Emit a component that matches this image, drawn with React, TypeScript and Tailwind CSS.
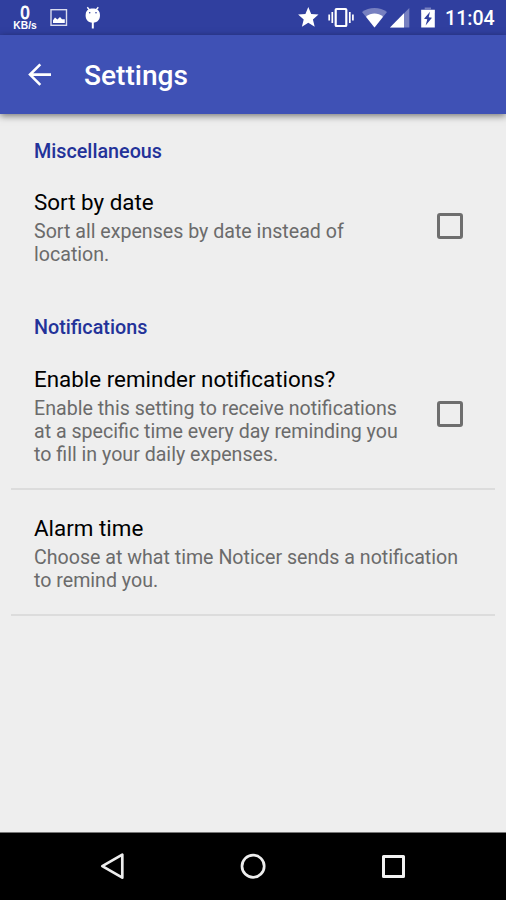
import React from "react";

function StatusBar() {
  return (
    <div className="flex h-[35px] shrink-0 items-start bg-[#303f9f] text-white">
      <div className="flex w-[50px] flex-col items-center pt-[5px] font-['Liberation_Sans',Arial,sans-serif]">
        <span className="scale-x-90 text-[18px] leading-[16px] [-webkit-text-stroke:0.9px_white]">0</span>
        <span className="text-[10.3px] font-bold leading-[10px]">KB/s</span>
      </div>
      <svg className="block" width="60" height="35" viewBox="50 0 60 35">
        <rect x="51" y="9.7" width="15.5" height="15.6" fill="none" stroke="#d9dcee" strokeWidth="1.4" />
        <path d="M53 23V20.2L55 17.6L57.4 19.6L60 17L62 19.3H64.8V23Z" fill="#fff" />
        <path d="M85.8 13.5C86.2 10.6 88.9 8.6 92.8 8.6C96.7 8.6 99.4 10.6 99.8 13.5C100.8 18.5 98 22.8 92.8 22.8C87.6 22.8 84.8 18.5 85.8 13.5Z" fill="#fff" />
        <path d="M87.3 7.2L89.8 10.2M98.3 7.2L95.8 10.2" fill="none" stroke="#fff" strokeWidth="1.4" />
        <path d="M92.8 22V28.5" fill="none" stroke="#fff" strokeWidth="2" />
        <circle cx="89.7" cy="12.8" r=".8" fill="#303f9f" />
        <circle cx="96" cy="12.8" r=".8" fill="#303f9f" />
      </svg>
      <div className="flex-1" />
      <svg className="block" width="150" height="35" viewBox="290 0 150 35">
        <path d="M308.3 7L311.2 14L318.5 14.5L312.9 19.4L314.7 26.8L308.3 22.8L301.9 26.8L303.7 19.4L298.1 14.5L305.4 14Z" fill="#fff" />
        <rect x="335.7" y="9" width="10.6" height="17" rx=".8" fill="none" stroke="#fff" strokeWidth="2.2" />
        <path d="M332.3 12V23M349.8 12V23" stroke="#fff" strokeWidth="1.7" />
        <path d="M329.2 14.5V20.5M352.9 14.5V20.5" stroke="#fff" strokeWidth="1.7" />
        <path d="M374.5 27.4L362 12C369 6.5 380 6.5 387 12Z" fill="#7780c0" />
        <path d="M374.5 27.4L366 16.7C371 12.3 378 12.3 383 16.7Z" fill="#fff" />
        <path d="M390 27.5L409.3 8V27.5Z" fill="#7780c0" />
        <path d="M390 27.5L404 13.3V27.5Z" fill="#fff" />
        <path d="M421.2 9.3H424.7V7.5H431V9.3H434.8V13H421.2Z" fill="#7780c0" />
        <path d="M421.2 10H434.8V27.5H421.2Z" fill="#fff" />
        <path d="M430 11.7L424 18.8L427.3 19.3L425.6 25.5L432 17.7L428.7 17.2Z" fill="#303f9f" />
      </svg>
      <div className="w-[66px] pl-[5px] pt-[7px] text-[19.6px] font-medium leading-[23px]">11:04</div>
    </div>
  );
}

function Toolbar() {
  return (
    <header className="z-10 flex h-[79px] shrink-0 items-center bg-[#3f51b5] pl-[28px] text-white shadow-[0_2px_7px_rgba(0,0,0,0.5)]">
      <svg className="block" width="24" height="24" viewBox="0 0 24 24" fill="none" stroke="#fff" strokeWidth="2.6">
        <path d="M23 11.6H2.5M12.3 1.3L2 11.6L12.3 21.9" />
      </svg>
      <h1 className="ml-[32px] mt-[2px] text-[28.1px] font-medium leading-[34px]">Settings</h1>
    </header>
  );
}

function SectionTitle({ children }: { children: React.ReactNode }) {
  return <h2 className="px-[34px] text-[19.75px] font-medium leading-[23px] text-[#233299]">{children}</h2>;
}

function Preference({ title, lines, checkbox = false }: { title: string; lines: string[]; checkbox?: boolean }) {
  return (
    <div className="flex items-center justify-between pl-[34px] pr-[43px]">
      <div className="whitespace-nowrap">
        <div className="text-[22.4px] leading-[26px] text-black">{title}</div>
        <div className="mt-[5px] text-[19.62px] leading-[23px] text-[#6b6b6b]">
          {lines.map((line) => (
            <div key={line}>{line}</div>
          ))}
        </div>
      </div>
      {checkbox && <div className="mb-[4px] size-[26px] shrink-0 rounded-[3px] border-[3px] border-[#6e6e6e]" />}
    </div>
  );
}

function Divider() {
  return <div className="mx-[11px] h-[2px] bg-[#dcdcdc]" />;
}

function NavigationBar() {
  return (
    <nav className="flex h-[68px] shrink-0 items-start justify-between border-t border-[#777] bg-black pl-[98px] pr-[98px] pt-[19px]">
      <svg className="block" width="28" height="28" viewBox="98 852 28 28" fill="none" stroke="#eee" strokeWidth="2.7" strokeLinejoin="round">
        <path d="M122.3 854.7V877.7L102.3 866.2Z" />
      </svg>
      <svg className="block" width="28" height="28" viewBox="239 852 28 28" fill="none" stroke="#eee" strokeWidth="2.7">
        <circle cx="253.1" cy="866.2" r="11.1" />
      </svg>
      <svg className="block" width="28" height="28" viewBox="380 852 28 28" fill="none" stroke="#f2f2f2" strokeWidth="3" strokeLinejoin="round">
        <rect x="383.5" y="856.5" width="20" height="20" />
      </svg>
    </nav>
  );
}

export default function App() {
  return (
    <div className="flex h-[900px] w-[506px] flex-col overflow-hidden bg-[#eee] font-[Roboto,sans-serif]">
      <StatusBar />
      <Toolbar />
      <main className="flex-1 pt-[26px]">
        <SectionTitle>Miscellaneous</SectionTitle>
        <div className="mt-[26px]">
          <Preference title="Sort by date" lines={["Sort all expenses by date instead of", "location."]} checkbox />
        </div>
        <div className="mt-[50px]">
          <SectionTitle>Notifications</SectionTitle>
        </div>
        <div className="mb-[22px] mt-[27px]">
          <Preference
            title="Enable reminder notifications?"
            lines={["Enable this setting to receive notifications", "at a specific time every day reminding you", "to fill in your daily expenses."]}
            checkbox
          />
        </div>
        <Divider />
        <div className="mb-[22px] mt-[25px]">
          <Preference title="Alarm time" lines={["Choose at what time Noticer sends a notification", "to remind you."]} />
        </div>
        <Divider />
      </main>
      <NavigationBar />
    </div>
  );
}
